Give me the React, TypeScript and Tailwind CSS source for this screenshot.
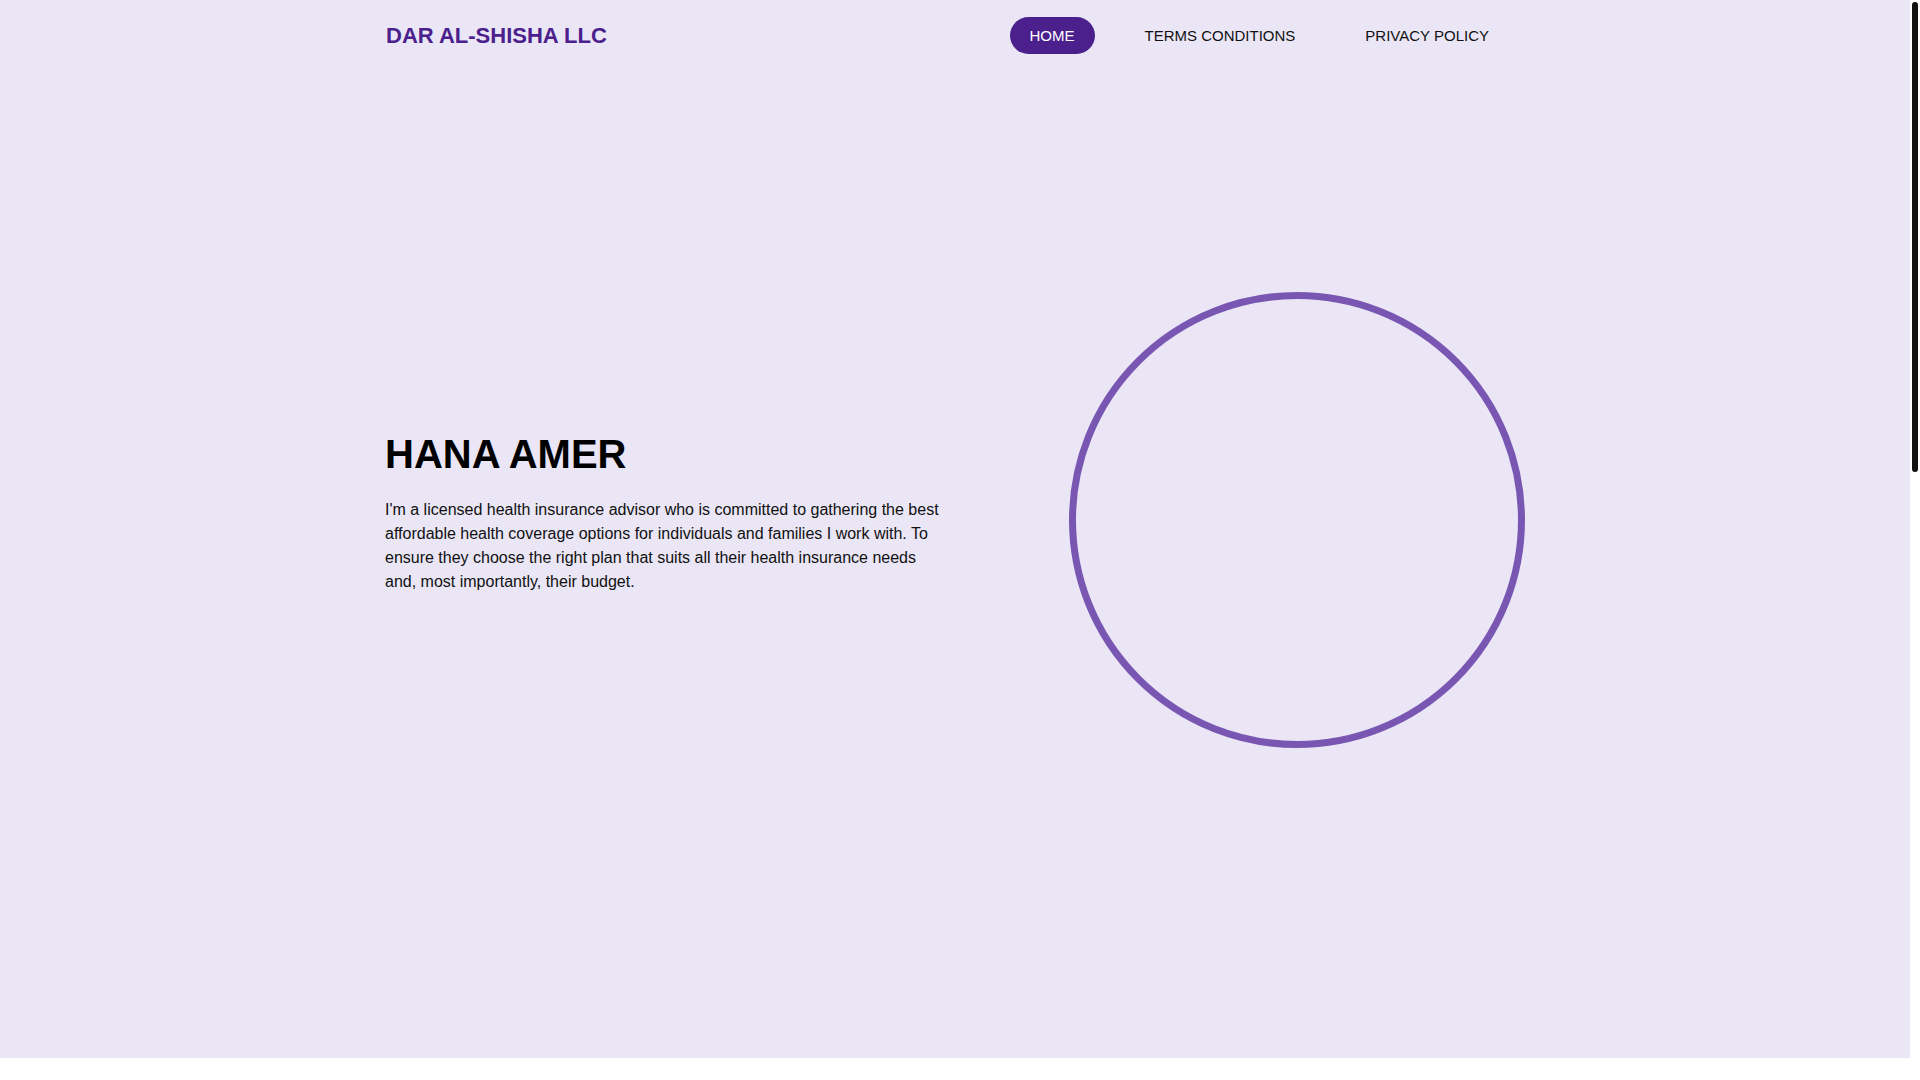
import React from "react";

export default function App() {
  return (
    <div
      className="flex h-[1080px] w-[1920px] overflow-hidden bg-white"
      style={{ fontFamily: '"Liberation Sans", Arial, sans-serif' }}
    >
      <div className="w-[1910px] shrink-0">
        <div className="h-[1058px] bg-[#eae6f5]">
          <div className="mx-auto w-[1140px]">
            <header className="flex h-[71px] items-center justify-between">
              <div className="pl-px text-[22px] font-bold leading-none text-[#4b208d]">
                DAR AL-SHISHA LLC
              </div>
              <nav className="flex items-center gap-[30px] pr-[16px] text-[15px] leading-[17px]">
                <a className="rounded-full bg-[#4b208d] px-5 py-[10px] text-white">HOME</a>
                <a className="px-5 py-[10px] text-[#111111]">TERMS CONDITIONS</a>
                <a className="px-5 py-[10px] text-[#111111]">PRIVACY POLICY</a>
              </nav>
            </header>
            <section className="flex h-[898px] items-center justify-between">
              <div className="w-[570px] pb-[16px] pr-[15px]">
                <h1 className="mb-5 text-[40px] font-bold leading-[48px] text-black">HANA AMER</h1>
                <p className="text-[16px] leading-6 text-[#111111]">
                  I'm a licensed health insurance advisor who is committed to gathering the best
                  affordable health coverage options for individuals and families I work with. To
                  ensure they choose the right plan that suits all their health insurance needs
                  and, most importantly, their budget.
                </p>
              </div>
              <div className="flex w-[570px] justify-end">
                <div className="h-[456px] w-[456px] rounded-full border-[7px] border-solid border-[#7a56b3]" />
              </div>
            </section>
          </div>
        </div>
      </div>
      <div className="flex w-[10px] shrink-0 justify-center bg-white pt-[2px]">
        <div className="h-[470px] w-[6px] rounded-full bg-[#111111]" />
      </div>
    </div>
  );
}
